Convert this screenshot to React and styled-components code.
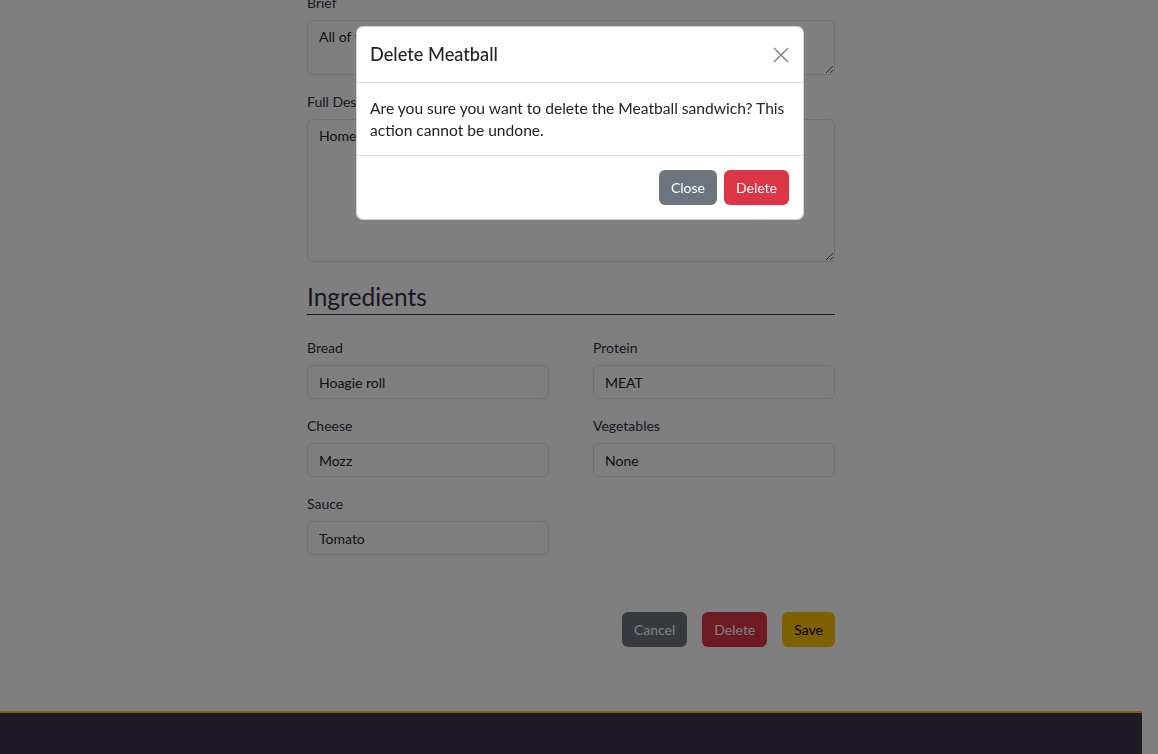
import styled, { createGlobalStyle } from "styled-components"

const GlobalStyle = createGlobalStyle`
	html {
		font-size: 14px;
	}
	body {
		margin: 0;
		padding-right: 16px;
		font-family: "Lato", "Liberation Sans", sans-serif;
		font-size: 14px;
		line-height: 1.5;
		color: #212529;
		background: #fff;
		overflow: hidden;
	}
	* {
		box-sizing: border-box;
	}
`

const Page = styled.div`
	display: flex;
	flex-direction: column;
	min-height: 100vh;
`

const Main = styled.main`
	width: 528px;
	margin: -8px auto 0;
`

const Field = styled.div`
	margin-bottom: ${(p) => p.$mb || 0}px;
`

const Label = styled.label`
	display: block;
	margin-bottom: 7px;
	line-height: 21px;
	color: #352d48;
`

const TextArea = styled.textarea`
	display: block;
	width: 100%;
	height: ${(p) => p.$h}px;
	padding: 5px 11px;
	font-family: inherit;
	font-size: 14px;
	line-height: 21px;
	color: #212529;
	background: #fff;
	border: 1px solid #dee2e6;
	border-radius: 6px;
	resize: vertical;
	outline: none;
`

const Input = styled.input`
	display: block;
	width: 100%;
	height: 34px;
	padding: 5px 11px;
	font-family: inherit;
	font-size: 14px;
	color: #212529;
	background: #fff;
	border: 1px solid #dee2e6;
	border-radius: 6px;
	outline: none;
`

const SectionTitle = styled.h3`
	margin: 20px 0 0;
	padding-bottom: 3px;
	font-size: 24.5px;
	font-weight: 400;
	line-height: 29px;
	color: #352d48;
	border-bottom: 1px solid #352d48;
`

const IngredientGrid = styled.div`
	display: grid;
	grid-template-columns: 242px 242px;
	column-gap: 44px;
	row-gap: 16px;
	margin-top: 22px;
`

const Actions = styled.div`
	display: flex;
	justify-content: flex-end;
	gap: 15px;
	margin-top: 57px;
`

const Button = styled.button`
	height: 35px;
	padding: 0 11px;
	font-family: inherit;
	font-size: 14px;
	line-height: 21px;
	border: 1px solid transparent;
	border-radius: 6px;
	cursor: pointer;
	color: ${(p) => (p.$variant === "warning" ? "#000" : "#fff")};
	background: ${(p) =>
		p.$variant === "danger" ? "#dc3545" : p.$variant === "warning" ? "#ffc107" : "#6c757d"};
`

const Footer = styled.footer`
	margin-top: 64px;
	height: 90px;
	background: #3e3451;
	border-top: 2px solid #ffc107;
`

const Overlay = styled.div`
	position: fixed;
	inset: 0;
	display: flex;
	justify-content: center;
	align-items: flex-start;
	padding: 26px 0 0 2px;
	background: rgba(0, 0, 0, 0.5);
`

const Modal = styled.div`
	width: 448px;
	background: #fff;
	border: 1px solid rgba(0, 0, 0, 0.175);
	border-radius: 7px;
	overflow: hidden;
`

const ModalHeader = styled.div`
	display: flex;
	align-items: center;
	justify-content: space-between;
	padding: 14px 14px 14px 13px;
	border-bottom: 1px solid #dee2e6;
`

const ModalTitle = styled.h5`
	margin: 0;
	font-size: 18.2px;
	font-weight: 500;
	line-height: 27px;
	color: #212529;
`

const CloseX = styled.button`
	display: flex;
	padding: 0;
	background: none;
	border: none;
	cursor: pointer;
	color: #000;
	opacity: 0.5;
`

const ModalBody = styled.div`
	padding: 14px 13px;
	font-size: 15.6px;
	line-height: 22px;
	color: #212529;
`

const ModalFooter = styled.div`
	display: flex;
	justify-content: flex-end;
	gap: 7px;
	padding: 14px 14px 14px;
	border-top: 1px solid #dee2e6;
`

const ingredients = [
	["Bread", "Hoagie roll"],
	["Protein", "MEAT"],
	["Cheese", "Mozz"],
	["Vegetables", "None"],
	["Sauce", "Tomato"],
]

export default function App() {
	return (
		<>
			<GlobalStyle />
			<Page>
				<Main>
					<Field $mb={16}>
						<Label>Brief</Label>
						<TextArea $h={55} readOnly defaultValue="All of the classic flavor." />
					</Field>
					<Field>
						<Label>Full Description</Label>
						<TextArea $h={143} readOnly defaultValue="Homemade meatballs in tomato sauce." />
					</Field>

					<SectionTitle>Ingredients</SectionTitle>
					<IngredientGrid>
						{ingredients.map(([name, value]) => (
							<Field key={name}>
								<Label>{name}</Label>
								<Input readOnly defaultValue={value} />
							</Field>
						))}
					</IngredientGrid>

					<Actions>
						<Button $variant="secondary">Cancel</Button>
						<Button $variant="danger">Delete</Button>
						<Button $variant="warning">Save</Button>
					</Actions>
				</Main>
				<Footer />
			</Page>

			<Overlay>
				<Modal>
					<ModalHeader>
						<ModalTitle>Delete Meatball</ModalTitle>
						<CloseX aria-label="Close">
							<svg width="16" height="16" viewBox="0 0 16 16" fill="none" stroke="currentColor" strokeWidth="1.4">
								<path d="M1 1L15 15M15 1L1 15" />
							</svg>
						</CloseX>
					</ModalHeader>
					<ModalBody>
						Are you sure you want to delete the Meatball sandwich? This action cannot be undone.
					</ModalBody>
					<ModalFooter>
						<Button $variant="secondary">Close</Button>
						<Button $variant="danger">Delete</Button>
					</ModalFooter>
				</Modal>
			</Overlay>
		</>
	)
}
